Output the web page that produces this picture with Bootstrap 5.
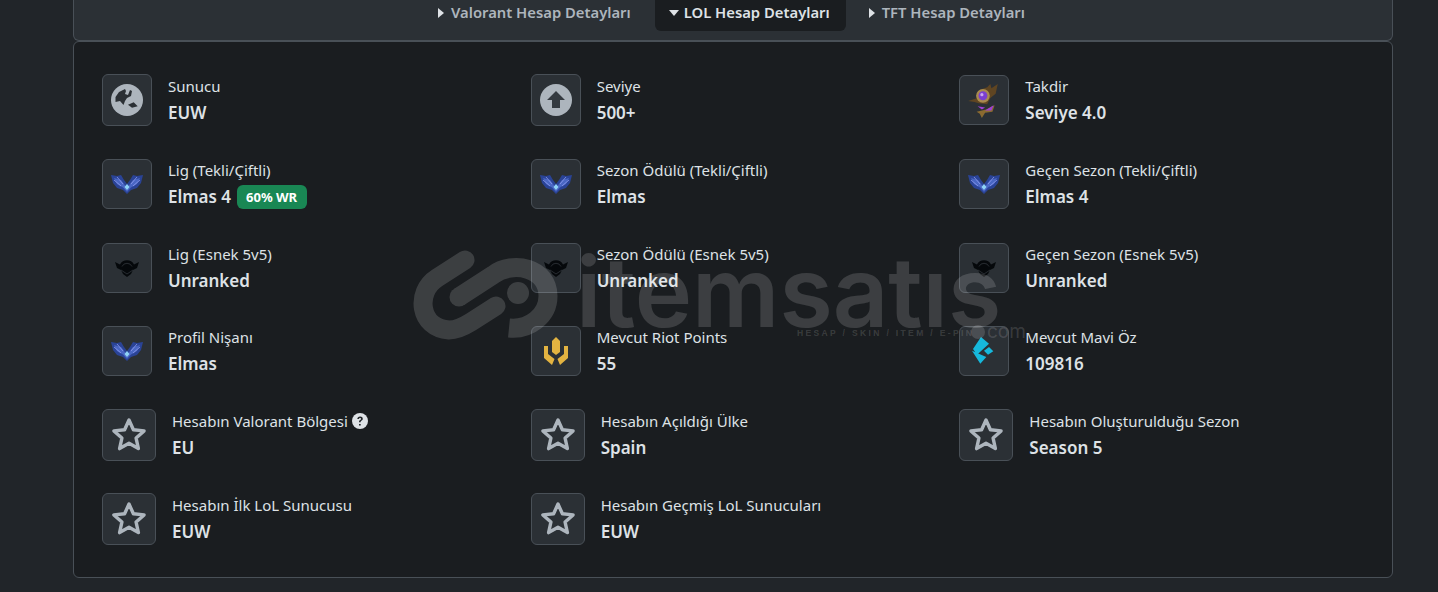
<!DOCTYPE html>
<html lang="tr">
<head>
  <meta charset="UTF-8">
  <title>LOL Hesap Detayları</title>
  <link href="https://cdn.jsdelivr.net/npm/bootstrap@5.3.0/dist/css/bootstrap.min.css" rel="stylesheet">
  <style>
    html, body { height: 592px; overflow: hidden; }
    body { background: #212529; font-family: "Noto Sans", "Open Sans", sans-serif; color: #dee2e6; font-size: 15px; }
    .page-wrap { width: 1320px; margin-left: 73px; position: relative; }
    .tab-bar { height: 41px; background: #2b3035; border: 1px solid #495057; border-top: 0; border-radius: 0 0 6px 6px; padding-left: 350px; gap: 8px; }
    .tab-item { height: 31px; padding: 0 16px 6px 14px; color: #adb5bd; font-weight: 600; font-size: 14.8px; border-radius: 0 0 6px 6px; gap: 5px; }
    .tab-item.on { background: #1a1d20; color: #dee2e6; }
    .tab-item.on + .tab-item { margin-left: 1px; }
    .tri-right { width: 0; height: 0; margin-right: 2px; border-left: 6px solid #dee2e6; border-top: 5px solid transparent; border-bottom: 5px solid transparent; }
    .tri-down { width: 0; height: 0; border-top: 6px solid #dee2e6; border-left: 5.5px solid transparent; border-right: 5.5px solid transparent; }
    .detail-box { background: #1a1d20; border: 1px solid #495057; border-radius: 6px; height: 537px; padding: 32.4px 28px 0; }
    .stat-col { margin-bottom: 33.3px; }
    .stat-col:has(.tall) { margin-bottom: 33px; }
    .stat-col:has(.wide) { margin-bottom: 32px; }
    .icon-tile { width: 50px; height: 50px; flex: none; background: #2b3035; border: 1px solid #495057; border-radius: 6px; }
    .icon-tile.tall { height: 52px; }
    .icon-tile.wide { width: 54px; height: 52px; }
    .stat-text { height: 50px; padding-top: 1px; }
    .stat-label { font-size: 15px; line-height: 20px; }
    .stat-value { font-size: 17px; line-height: 24px; margin-top: 5px; font-weight: 600; }
    .wr-tag { background: #198754; color: #fff; font-size: 13px; font-weight: 700; border-radius: 6px; padding: 3px 9.5px; margin-left: 1px; line-height: 18px; vertical-align: 1px; }
    .water-mark { position: absolute; left: 332px; top: 240px; width: 700px; height: 110px; pointer-events: none; color: rgba(255,255,255,.15); }
    .wm-word { position: absolute; left: 171px; top: -7px; font-family: Inter, sans-serif; font-size: 97px; line-height: 118px; font-weight: 600; letter-spacing: 0; }
    .wm-tag { position: absolute; left: 392px; top: 88px; font-family: "Liberation Sans", sans-serif; font-weight: 700; font-size: 8.5px; letter-spacing: 2.35px; white-space: nowrap; line-height: 11px; }
    .wm-dot { position: absolute; left: 566px; top: 85px; width: 14px; height: 14px; border-radius: 50%; background: rgba(255,255,255,.15); }
    .wm-com { position: absolute; left: 582px; top: 79px; font-family: Inter, sans-serif; font-size: 19px; line-height: 26px; }
  </style>
</head>
<body>
<svg width="0" height="0" class="position-absolute">
  <defs>
    <symbol id="ic-star" viewBox="0 0 36 36"><path d="M18 3l4.400 9.800 10.700 1.100-8 7.200 2.300 10.500L18 26.300 8.600 31.600l2.300-10.500-8-7.200 10.700-1.100z" fill="none" stroke="#adb5bd" stroke-width="3.400" stroke-linejoin="round"/></symbol>
    <symbol id="ic-wing" viewBox="0 0 32 20">
      <path d="M0 1l6 1 4-1 3 5 3 4 3-4 3-5 4 1 6-1-2 8-4 5-6 2-4 4-4-4-6-2-4-5z" fill="#2a4396"/>
      <path d="M3 4l7 2 6 8 6-8 7-2-3 6-6 3.500-4 4.500-4-4.500-6-3.500z" fill="#4a67c4"/>
      <path d="M6 3l6 7M26 3l-6 7M3 6l7 6M29 6l-7 6" stroke="#8f9cf0" stroke-width=".8"/>
      <path d="M16 10l2.500 3-2.500 3-2.500-3z" fill="#8fd3f5"/>
    </symbol>
    <symbol id="ic-unranked" viewBox="0 0 24 18">
      <path d="M0 3l5 2.500a8 8 0 0 1 14 0L24 3l-2 6-4 2-2 4-4 3-4-3-2-4-4-2z" fill="#05080b"/>
      <path d="M7 7.500a5.500 5.500 0 0 1 10 0M6 11l6 4 6-4" fill="none" stroke="#2b3035" stroke-width=".9"/>
    </symbol>
  </defs>
</svg>

<div class="page-wrap">
  <div class="tab-bar d-flex align-items-start">
    <div class="tab-item d-flex align-items-center"><span class="tri-right"></span>Valorant Hesap Detayları</div>
    <div class="tab-item on d-flex align-items-center"><span class="tri-down"></span>LOL Hesap Detayları</div>
    <div class="tab-item d-flex align-items-center"><span class="tri-right"></span>TFT Hesap Detayları</div>
  </div>

  <div class="detail-box">
    <div class="row">
      <div class="col-4 stat-col d-flex align-items-center gap-3">
        <div class="icon-tile tall d-flex align-items-center justify-content-center">
          <svg width="32" height="32" viewBox="0 0 32 32"><circle cx="16" cy="16" r="16" fill="#adb5bd"/><path d="M4.500 13l3.500-5 6-3 1 2-1 3 3 1 2-5 2 1-1 5-4 2-2 3-1.500 4-3.500-4-4.500 1z" fill="#2b3035"/><path d="M17 20.700l5.700-2.400 4 4-5.700 1.400z" fill="#2b3035"/></svg>
        </div>
        <div class="stat-text"><div class="stat-label">Sunucu</div><div class="stat-value">EUW</div></div>
      </div>
      <div class="col-4 stat-col d-flex align-items-center gap-3">
        <div class="icon-tile tall d-flex align-items-center justify-content-center">
          <svg width="32" height="32" viewBox="0 0 32 32"><circle cx="16" cy="16" r="16" fill="#adb5bd"/><path d="M16 7l9 9h-5v8h-8v-8H7z" fill="#343a40"/></svg>
        </div>
        <div class="stat-text"><div class="stat-label">Seviye</div><div class="stat-value">500+</div></div>
      </div>
      <div class="col-4 stat-col d-flex align-items-center gap-3">
        <div class="icon-tile d-flex align-items-center justify-content-center">
          <svg width="34" height="36" viewBox="0 0 32 34"><path d="M1 18l9-3 3-8 6-2 3-3 1 4 6-4-2 9-5 4-3 6-8-1-4-1z" fill="#5f4522"/><path d="M9 28l9-2 8-4-2 6-7 1-3 5-2-4z" fill="#8a6a30"/><path d="M10 23l7 1-3 2zM17 27l8-5-2 5z" fill="#a13fd6"/><circle cx="15" cy="13" r="6.500" fill="#a88a4e"/><circle cx="15" cy="13" r="4.200" fill="#7b3fd0"/><circle cx="14" cy="12" r="1.500" fill="#c9a5f0"/></svg>
        </div>
        <div class="stat-text"><div class="stat-label">Takdir</div><div class="stat-value">Seviye 4.0</div></div>
      </div>

      <div class="col-4 stat-col d-flex align-items-center gap-3">
        <div class="icon-tile d-flex align-items-center justify-content-center"><svg width="32" height="20"><use href="#ic-wing"/></svg></div>
        <div class="stat-text"><div class="stat-label">Lig (Tekli/Çiftli)</div><div class="stat-value">Elmas 4 <span class="wr-tag">60% WR</span></div></div>
      </div>
      <div class="col-4 stat-col d-flex align-items-center gap-3">
        <div class="icon-tile d-flex align-items-center justify-content-center"><svg width="32" height="20"><use href="#ic-wing"/></svg></div>
        <div class="stat-text"><div class="stat-label">Sezon Ödülü (Tekli/Çiftli)</div><div class="stat-value">Elmas</div></div>
      </div>
      <div class="col-4 stat-col d-flex align-items-center gap-3">
        <div class="icon-tile d-flex align-items-center justify-content-center"><svg width="32" height="20"><use href="#ic-wing"/></svg></div>
        <div class="stat-text"><div class="stat-label">Geçen Sezon (Tekli/Çiftli)</div><div class="stat-value">Elmas 4</div></div>
      </div>

      <div class="col-4 stat-col d-flex align-items-center gap-3">
        <div class="icon-tile d-flex align-items-center justify-content-center"><svg width="24" height="18"><use href="#ic-unranked"/></svg></div>
        <div class="stat-text"><div class="stat-label">Lig (Esnek 5v5)</div><div class="stat-value">Unranked</div></div>
      </div>
      <div class="col-4 stat-col d-flex align-items-center gap-3">
        <div class="icon-tile d-flex align-items-center justify-content-center"><svg width="24" height="18"><use href="#ic-unranked"/></svg></div>
        <div class="stat-text"><div class="stat-label">Sezon Ödülü (Esnek 5v5)</div><div class="stat-value">Unranked</div></div>
      </div>
      <div class="col-4 stat-col d-flex align-items-center gap-3">
        <div class="icon-tile d-flex align-items-center justify-content-center"><svg width="24" height="18"><use href="#ic-unranked"/></svg></div>
        <div class="stat-text"><div class="stat-label">Geçen Sezon (Esnek 5v5)</div><div class="stat-value">Unranked</div></div>
      </div>

      <div class="col-4 stat-col d-flex align-items-center gap-3">
        <div class="icon-tile d-flex align-items-center justify-content-center"><svg width="32" height="20"><use href="#ic-wing"/></svg></div>
        <div class="stat-text"><div class="stat-label">Profil Nişanı</div><div class="stat-value">Elmas</div></div>
      </div>
      <div class="col-4 stat-col d-flex align-items-center gap-3">
        <div class="icon-tile d-flex align-items-center justify-content-center">
          <svg width="26" height="30" viewBox="12 10 26 30"><path d="M25 11l4 4v11l-4 3-4-3V15z" fill="#e3b341"/><path d="M13 20h4v8l6.500 5-2.500 6-8-7zM37 20h-4v8l-6.500 5 2.500 6 8-7z" fill="#e3b341"/></svg>
        </div>
        <div class="stat-text"><div class="stat-label">Mevcut Riot Points</div><div class="stat-value">55</div></div>
      </div>
      <div class="col-4 stat-col d-flex align-items-center gap-3">
        <div class="icon-tile d-flex align-items-center justify-content-center">
          <svg width="24" height="28" viewBox="0 0 24 28"><path d="M9 0l8 6.700L5 17.700 1 12zM17 10l4.300 4.300L16 17.700 12 13.700zM0 13.700L14.300 20l-6 6.700z" fill="#16b8dc"/></svg>
        </div>
        <div class="stat-text"><div class="stat-label">Mevcut Mavi Öz</div><div class="stat-value">109816</div></div>
      </div>

      <div class="col-4 stat-col d-flex align-items-center gap-3">
        <div class="icon-tile wide d-flex align-items-center justify-content-center"><svg width="36" height="36"><use href="#ic-star"/></svg></div>
        <div class="stat-text">
          <div class="stat-label d-flex align-items-center gap-1">Hesabın Valorant Bölgesi
            <svg width="16" height="16" viewBox="0 0 16 16"><circle cx="8" cy="8" r="8" fill="#dee2e6"/><path d="M5.300 6.100c0-1.600 1.200-2.600 2.800-2.600 1.500 0 2.700.9 2.700 2.300 0 1-.6 1.500-1.300 2-.7.5-.9.7-.9 1.400H7c0-1.100.3-1.600 1-2.100.6-.4 1-.7 1-1.200s-.4-.9-1-.9-1 .4-1.100 1.100zM7 11h1.700v1.600H7z" fill="#212529"/></svg>
          </div>
          <div class="stat-value">EU</div>
        </div>
      </div>
      <div class="col-4 stat-col d-flex align-items-center gap-3">
        <div class="icon-tile wide d-flex align-items-center justify-content-center"><svg width="36" height="36"><use href="#ic-star"/></svg></div>
        <div class="stat-text"><div class="stat-label">Hesabın Açıldığı Ülke</div><div class="stat-value">Spain</div></div>
      </div>
      <div class="col-4 stat-col d-flex align-items-center gap-3">
        <div class="icon-tile wide d-flex align-items-center justify-content-center"><svg width="36" height="36"><use href="#ic-star"/></svg></div>
        <div class="stat-text"><div class="stat-label">Hesabın Oluşturulduğu Sezon</div><div class="stat-value">Season 5</div></div>
      </div>

      <div class="col-4 stat-col d-flex align-items-center gap-3">
        <div class="icon-tile wide d-flex align-items-center justify-content-center"><svg width="36" height="36"><use href="#ic-star"/></svg></div>
        <div class="stat-text"><div class="stat-label">Hesabın İlk LoL Sunucusu</div><div class="stat-value">EUW</div></div>
      </div>
      <div class="col-4 stat-col d-flex align-items-center gap-3">
        <div class="icon-tile wide d-flex align-items-center justify-content-center"><svg width="36" height="36"><use href="#ic-star"/></svg></div>
        <div class="stat-text"><div class="stat-label">Hesabın Geçmiş LoL Sunucuları</div><div class="stat-value">EUW</div></div>
      </div>
    </div>
  </div>

  <!-- watermark lies over the stats -->
  <div class="water-mark">
    <svg width="170" height="110" viewBox="0 0 170 110" class="position-absolute top-0 start-0">
      <g opacity=".15" fill="none" stroke="#fff" stroke-width="19">
        <path d="M60 20L32 38C10 52 14 88 44 90 52 90 58 87 66 82L91 66" stroke-linecap="round"/>
        <path d="M54 57L88 35C108 20 143 28 143 56 143 76 124 90 104 88" stroke-linecap="butt"/>
        <path d="M54 57h.01" stroke-linecap="round"/>
        <circle cx="113" cy="53" r="11" fill="#fff" stroke="none"/>
      </g>
    </svg>
    <span class="wm-word">itemsatıs</span>
    <span class="wm-tag">HESAP / SKIN / ITEM / E-PIN</span>
    <span class="wm-dot"></span>
    <span class="wm-com">com</span>
  </div>
</div>
<script src="https://cdn.jsdelivr.net/npm/bootstrap@5.3.0/dist/js/bootstrap.bundle.min.js"></script>
</body>
</html>
